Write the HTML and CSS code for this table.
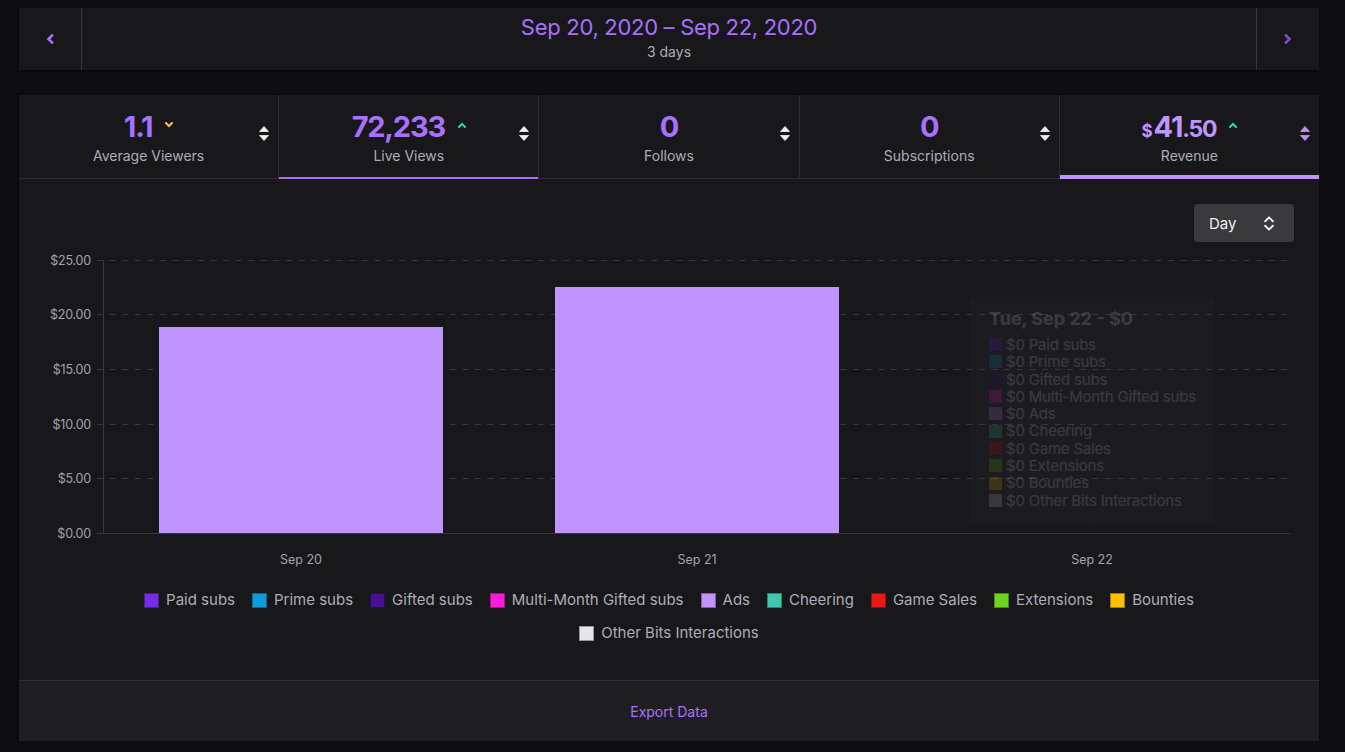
FILE: index.html
```html
<!DOCTYPE html>
<html lang="en">
<head>
<meta charset="utf-8">
<title>Revenue</title>
<link rel="stylesheet" href="styles.css">
</head>
<body>
<div class="page">
  <header class="range card">
    <button class="nav prev" aria-label="Previous">
      <svg class="chev" viewBox="0 0 8 10"><polyline points="6,1.5 2.5,5 6,8.5"/></svg>
    </button>
    <div class="range-title">
      <div class="dates">Sep 20, 2020 – Sep 22, 2020</div>
      <div class="span">3 days</div>
    </div>
    <button class="nav next" aria-label="Next">
      <svg class="chev" viewBox="0 0 8 10"><polyline points="2,1.5 5.5,5 2,8.5"/></svg>
    </button>
  </header>

  <section class="panel card">
    <div class="tabs">
      <div class="tab">
        <div class="value"><span>1.1</span><svg class="trend down" viewBox="0 0 8 6"><polyline points="1,1 4,4 7,1"/></svg></div>
        <div class="label">Average Viewers</div>
        <svg class="sort" viewBox="0 0 10 15"><polygon points="5,0.5 9.5,5.5 0.5,5.5"/><polygon points="0.5,9.5 9.5,9.5 5,14.5"/></svg>
      </div>
      <div class="tab hover">
        <div class="value"><span>72,233</span><svg class="trend up" viewBox="0 0 8 6"><polyline points="1,5 4,2 7,5"/></svg></div>
        <div class="label">Live Views</div>
        <svg class="sort" viewBox="0 0 10 15"><polygon points="5,0.5 9.5,5.5 0.5,5.5"/><polygon points="0.5,9.5 9.5,9.5 5,14.5"/></svg>
      </div>
      <div class="tab">
        <div class="value"><span>0</span></div>
        <div class="label">Follows</div>
        <svg class="sort" viewBox="0 0 10 15"><polygon points="5,0.5 9.5,5.5 0.5,5.5"/><polygon points="0.5,9.5 9.5,9.5 5,14.5"/></svg>
      </div>
      <div class="tab">
        <div class="value"><span>0</span></div>
        <div class="label">Subscriptions</div>
        <svg class="sort" viewBox="0 0 10 15"><polygon points="5,0.5 9.5,5.5 0.5,5.5"/><polygon points="0.5,9.5 9.5,9.5 5,14.5"/></svg>
      </div>
      <div class="tab active">
        <div class="value"><span><span class="cur">$</span>41<span class="cents">.50</span></span><svg class="trend up" viewBox="0 0 8 6"><polyline points="1,5 4,2 7,5"/></svg></div>
        <div class="label">Revenue</div>
        <svg class="sort" viewBox="0 0 10 15"><polygon points="5,0.5 9.5,5.5 0.5,5.5"/><polygon points="0.5,9.5 9.5,9.5 5,14.5"/></svg>
      </div>
    </div>

    <div class="chart">
      <div class="toolbar">
        <div class="select">
          <span>Day</span>
          <svg class="updown" viewBox="0 0 10 15"><polyline points="1.2,5.2 5,1.4 8.8,5.2"/><polyline points="1.2,9.8 5,13.6 8.8,9.8"/></svg>
        </div>
      </div>

      <svg class="plot" viewBox="0 0 1300 333">
        <g class="grid">
          <line x1="78" x2="1271" y1="18.5" y2="18.5"/>
          <line x1="78" x2="1271" y1="72.5" y2="72.5"/>
          <line x1="78" x2="1271" y1="127.5" y2="127.5"/>
          <line x1="78" x2="1271" y1="182.5" y2="182.5"/>
          <line x1="78" x2="1271" y1="236.5" y2="236.5"/>
        </g>
        <line class="axis" x1="84.5" x2="84.5" y1="18" y2="291.5"/>
        <rect class="bar" x="140" y="85" width="284" height="206.5"/>
        <rect class="bar" x="536" y="45" width="284" height="246.5"/>
        <line class="axis" x1="78" x2="1271" y1="291.5" y2="291.5"/>
        <g class="ytick">
          <text x="72" y="23">$25.00</text>
          <text x="72" y="77">$20.00</text>
          <text x="72" y="132">$15.00</text>
          <text x="72" y="187">$10.00</text>
          <text x="72" y="241">$5.00</text>
          <text x="72" y="296">$0.00</text>
        </g>
        <g class="xtick">
          <text x="282" y="322">Sep 20</text>
          <text x="678" y="322">Sep 21</text>
          <text x="1073" y="322">Sep 22</text>
        </g>
      </svg>

      <div class="tooltip">
        <h4>Tue, Sep 22 - $0</h4>
        <ul>
          <li><i class="sw c-paid"></i>$0 Paid subs</li>
          <li><i class="sw c-prime"></i>$0 Prime subs</li>
          <li><i class="sw c-gifted"></i>$0 Gifted subs</li>
          <li><i class="sw c-multi"></i>$0 Multi-Month Gifted subs</li>
          <li><i class="sw c-ads"></i>$0 Ads</li>
          <li><i class="sw c-cheer"></i>$0 Cheering</li>
          <li><i class="sw c-game"></i>$0 Game Sales</li>
          <li><i class="sw c-ext"></i>$0 Extensions</li>
          <li><i class="sw c-bounty"></i>$0 Bounties</li>
          <li><i class="sw c-other"></i>$0 Other Bits Interactions</li>
        </ul>
      </div>

      <ul class="legend">
        <li><i class="sw c-paid"></i>Paid subs</li>
        <li><i class="sw c-prime"></i>Prime subs</li>
        <li><i class="sw c-gifted"></i>Gifted subs</li>
        <li><i class="sw c-multi"></i>Multi-Month Gifted subs</li>
        <li><i class="sw c-ads"></i>Ads</li>
        <li><i class="sw c-cheer"></i>Cheering</li>
        <li><i class="sw c-game"></i>Game Sales</li>
        <li><i class="sw c-ext"></i>Extensions</li>
        <li><i class="sw c-bounty"></i>Bounties</li>
        <li><i class="sw c-other"></i>Other Bits Interactions</li>
      </ul>
    </div>

    <footer class="export">Export Data</footer>
  </section>
</div>
</body>
</html>
```

FILE: styles.css
```css
* { box-sizing: border-box; }

body {
  margin: 0;
  background: #0e0e10;
  font-family: Inter, "Noto Sans", "Liberation Sans", sans-serif;
  color: #efeff1;
}

.page {
  width: 1319px;
  padding: 8px 0 0 19px;
}

.card {
  background: #18181b;
  box-shadow: 0 1px 3px rgba(0, 0, 0, 0.7);
}

/* ---------- date range header ---------- */
.range {
  display: flex;
  height: 62px;
}

.nav {
  width: 63px;
  flex: none;
  border: 0;
  padding: 0;
  background: transparent;
  display: flex;
  align-items: center;
  justify-content: center;
}

.prev { border-right: 1px solid #37373c; }
.next { border-left: 1px solid #37373c; }

.chev {
  width: 8px;
  height: 10px;
  fill: none;
  stroke-width: 2.6;
  stroke-linecap: square;
  stroke-linejoin: miter;
}
.prev .chev { stroke: #a970ff; }
.next .chev { stroke: #7c4fcc; }

.range-title {
  flex: 1;
  text-align: center;
  padding-top: 5px;
}

.dates {
  font-size: 22px;
  line-height: 28px;
  letter-spacing: -0.3px;
  color: #a970ff;
}

.span {
  margin-top: 1px;
  font-size: 14px;
  line-height: 20px;
  color: #adadb8;
}

/* ---------- stat tabs ---------- */
.panel { margin-top: 25px; }

.tabs {
  display: flex;
  border-bottom: 1px solid #2f2f35;
}

.tab {
  flex: 1 1 0;
  position: relative;
  height: 83px;
  padding-top: 15px;
  border-right: 1px solid #2c2c31;
  text-align: center;
}
.tab:last-child { border-right: 0; }

.value {
  display: flex;
  justify-content: center;
  gap: 13px;
  height: 34px;
  font-size: 29px;
  line-height: 34px;
  font-weight: 700;
  color: #a970ff;
  letter-spacing: -1.2px;
}

.tab.active .value { color: #bf94ff; }

.cur { font-size: 17px; line-height: 1; letter-spacing: 0; margin-right: 1px; }
.cents { font-size: 23px; line-height: 1; }

.trend {
  width: 8px;
  height: 6px;
  margin-top: 12px;
  fill: none;
  stroke-width: 2;
  stroke-linecap: square;
}
.trend.down { stroke: #f7c04a; }
.trend.up { stroke: #22d9b1; }

.label {
  margin-top: 2px;
  font-size: 14px;
  line-height: 20px;
  color: #adadb8;
}

.sort {
  position: absolute;
  right: 9px;
  top: 31px;
  width: 10px;
  height: 15px;
  fill: #efeff1;
  stroke: #efeff1;
  stroke-width: 0.8;
  stroke-linejoin: round;
}
.tab.active .sort { fill: #bf94ff; stroke: #bf94ff; }

.tab.hover::after,
.tab.active::after {
  content: "";
  position: absolute;
  left: 0;
  right: 0;
  bottom: -1px;
  height: 2px;
  background: #a970ff;
}
.tab.active::after {
  height: 4px;
  background: #bf94ff;
}

/* ---------- chart ---------- */
.chart {
  position: relative;
  padding-top: 25px;
}

.toolbar {
  display: flex;
  justify-content: flex-end;
  padding-right: 25px;
}

.select {
  width: 100px;
  height: 38px;
  padding: 0 20px 0 15px;
  background: #3a3a3d;
  border-radius: 4px;
  display: flex;
  align-items: center;
  justify-content: space-between;
  font-size: 15px;
  color: #efeff1;
}

.updown {
  width: 10px;
  height: 15px;
  fill: none;
  stroke: #efeff1;
  stroke-width: 2;
  stroke-linecap: round;
  stroke-linejoin: round;
}

.plot {
  display: block;
  width: 1300px;
  height: 333px;
}

.grid line {
  stroke: #38383c;
  stroke-width: 1;
  stroke-dasharray: 6 6.6;
}

.axis {
  stroke: #38383c;
  stroke-width: 1;
}

.bar { fill: #bf94ff; }

.ytick text,
.xtick text {
  font-family: Inter, "Noto Sans", sans-serif;
  font-size: 12.5px;
  fill: #a3a3ad;
}
.ytick text { text-anchor: end; letter-spacing: -0.2px; }
.xtick text { text-anchor: middle; }

/* ---------- tooltip (fading out) ---------- */
.tooltip {
  position: absolute;
  left: 950px;
  top: 118px;
  width: 246px;
  height: 226px;
  padding: 10px 20px 0;
  background: #34343a;
  border-radius: 4px;
  opacity: 0.16;
  color: #efeff1;
}

.tooltip::after {
  content: "";
  position: absolute;
  left: 118px;
  bottom: -5px;
  border: 5px solid transparent;
  border-bottom: 0;
  border-top-color: #34343a;
}

.tooltip h4 {
  margin: 0 0 5px;
  font-size: 18px;
  line-height: 24px;
  font-weight: 700;
}

.tooltip ul {
  list-style: none;
  margin: 0;
  padding: 0;
}

.tooltip li {
  display: flex;
  align-items: center;
  gap: 4px;
  font-size: 15px;
  line-height: 17.3px;
  letter-spacing: -0.2px;
  white-space: nowrap;
}

.tooltip .sw {
  width: 13px;
  height: 13px;
  border: 0;
}

/* ---------- legend ---------- */
.legend {
  list-style: none;
  width: 1120px;
  margin: 15px auto 0;
  padding: 0 0 37px;
  display: flex;
  flex-wrap: wrap;
  justify-content: center;
  column-gap: 17px;
  row-gap: 13px;
}

.legend li {
  display: flex;
  align-items: center;
  gap: 7px;
  font-size: 15px;
  line-height: 20px;
  color: #adadb8;
}

.sw {
  display: block;
  flex: none;
  width: 15px;
  height: 15px;
  border: 1px solid rgba(0, 0, 0, 0.35);
}

.c-paid { background: #772ce8; }
.c-prime { background: #0e9dd9; }
.c-gifted { background: #451093; }
.c-multi { background: #ff1ad9; }
.c-ads { background: #bf94ff; }
.c-cheer { background: #3dc9b0; }
.c-game { background: #e91916; }
.c-ext { background: #6bd420; }
.c-bounty { background: #ffbf00; }
.c-other { background: #e6e6ea; }

/* ---------- footer ---------- */
.export {
  height: 61px;
  border-top: 1px solid #303035;
  background: #1f1f23;
  display: flex;
  align-items: center;
  justify-content: center;
  font-size: 14px;
  color: #a970ff;
}
```
